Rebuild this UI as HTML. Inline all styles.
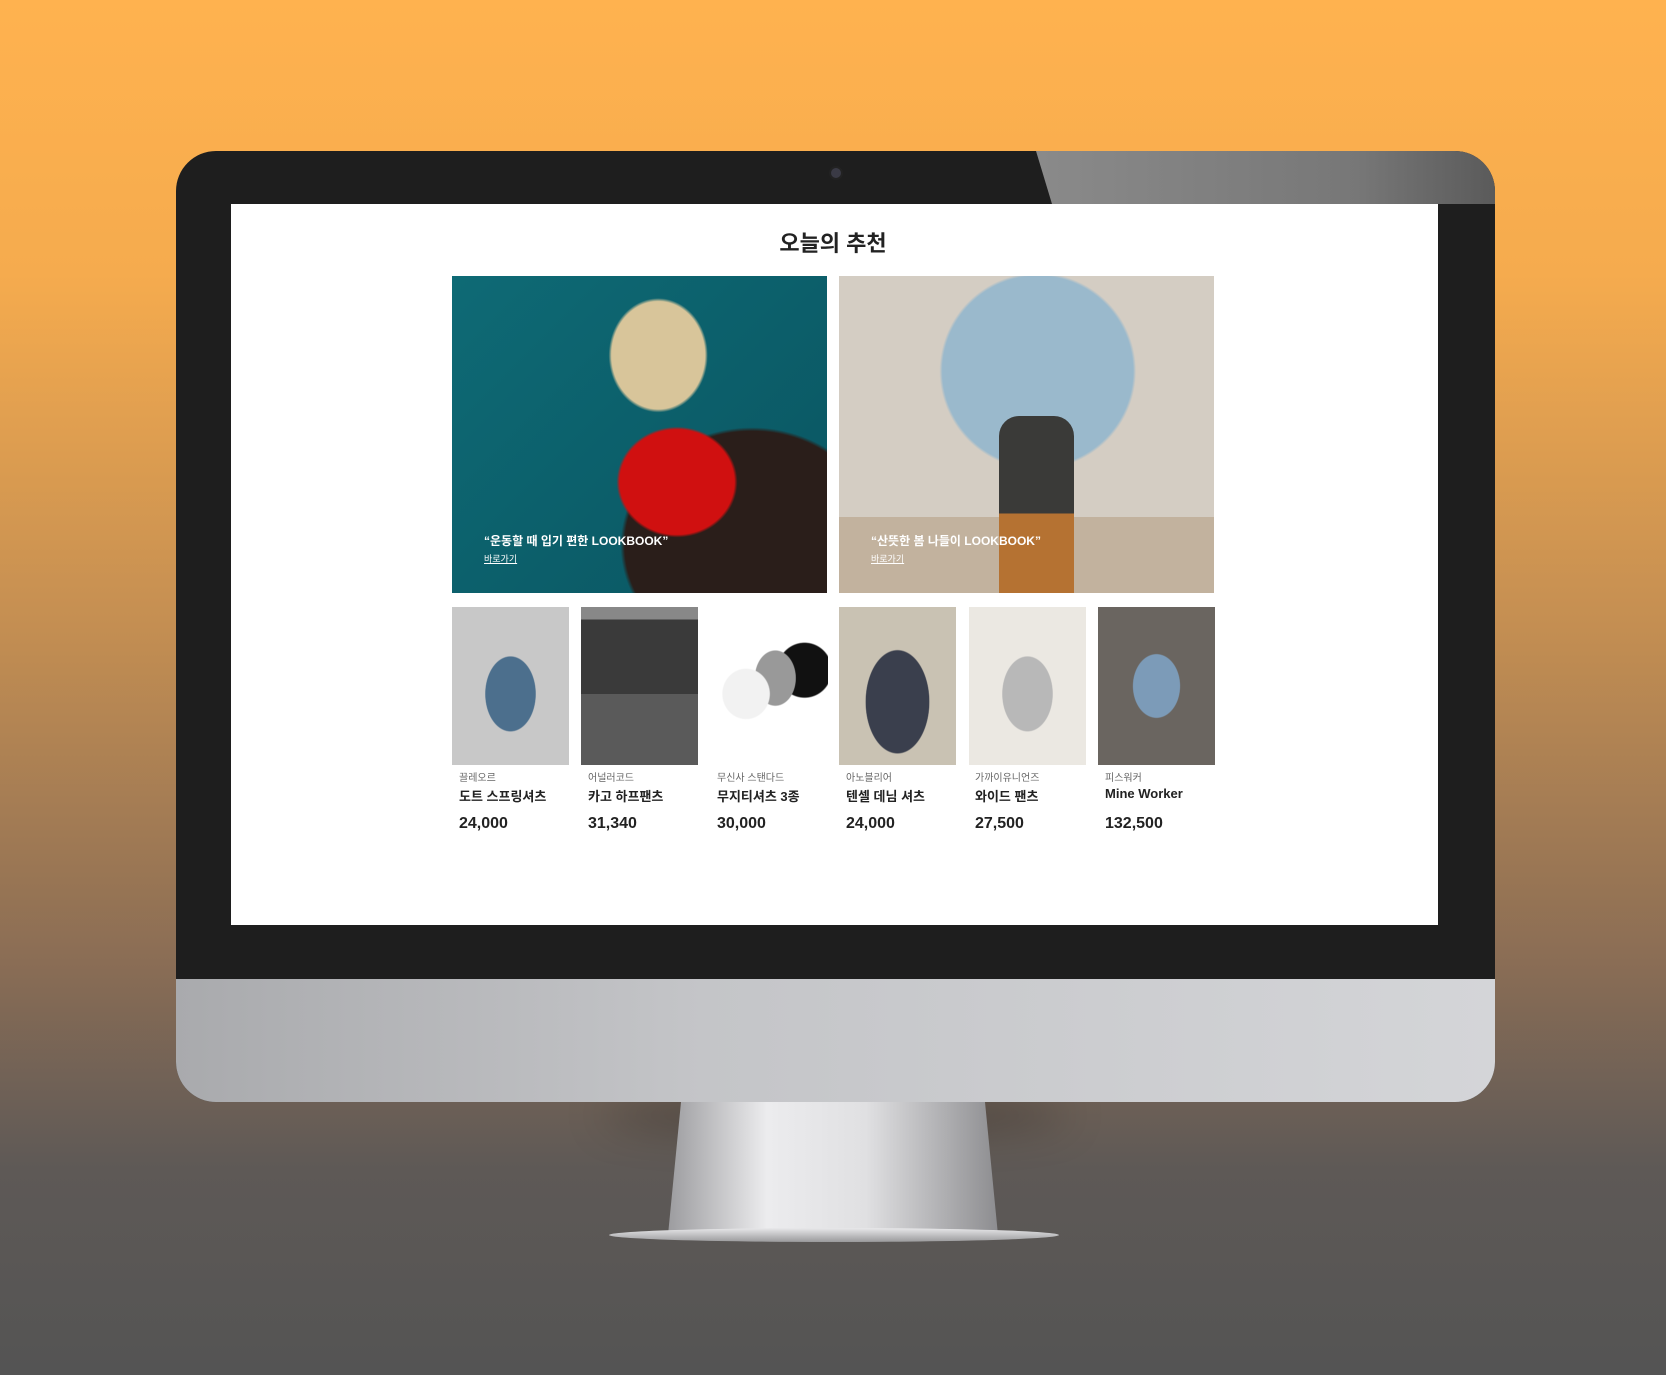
<!DOCTYPE html>
<html><head><meta charset="utf-8"><style>
*{margin:0;padding:0;box-sizing:border-box}
body{width:1666px;height:1375px;overflow:hidden;position:relative;font-family:"Liberation Sans","Noto Sans CJK KR",sans-serif;
background:linear-gradient(180deg,#ffb24f 0%,#f5ab4e 20%,#c58f52 45%,#8a6d55 70%,#5e5956 85%,#545454 100%)}
.abs{position:absolute}
.mon{left:176px;top:151px;width:1319px;height:951px;border-radius:40px;overflow:hidden;background:#1e1e1e}
.chin{left:0;top:828px;width:1319px;height:123px;background:linear-gradient(90deg,#a9aaad,#c4c5c8 40%,#d4d5d8 100%)}
.glare{left:860px;top:0;width:460px;height:53px;background:linear-gradient(90deg,#8a8a8a,#777 70%,#5a5a5a);clip-path:polygon(0 0,100% 0,100% 100%,16px 100%)}
.screen{left:231px;top:204px;width:1207px;height:721px;background:#fff}
.title{left:0;width:1666px;top:226px;text-align:center;font-size:22px;font-weight:bold;color:#222}
.big{top:276px;width:375px;height:317px;overflow:hidden}
.cap{left:32px;top:256px;color:#fff;font-size:12px;font-weight:bold}
.cap2{left:32px;top:276px;color:#fff;font-size:9px;text-decoration:underline}
.p{top:607px;width:117px;height:158px}
.br{top:769px;font-size:10px;color:#666}
.nm{top:786px;font-size:13px;font-weight:bold;color:#222}
.pr{top:815px;font-size:16px;font-weight:bold;color:#222}
</style></head><body>
<div class="abs" style="left:600px;top:1095px;width:470px;height:40px;background:rgba(0,0,0,.25);filter:blur(20px);border-radius:50%"></div>
<div class="abs" style="left:668px;top:1100px;width:330px;height:135px;background:linear-gradient(90deg,#9c9c9f,#ececee 30%,#e0e0e2 60%,#8d8d90);clip-path:polygon(4% 0,96% 0,100% 100%,0 100%)"></div>
<div class="abs" style="left:609px;top:1228px;width:450px;height:14px;border-radius:50%;background:linear-gradient(180deg,#e8e8ea,#9a9a9c)"></div>
<div class="abs mon">
<div class="abs glare"></div>
<div class="abs" style="left:653px;top:15px;width:14px;height:14px;border-radius:50%;background:#3a3a45;border:2px solid #222"></div>
<div class="abs chin"></div>
</div>
<div class="abs screen"></div>
<div class="abs title">오늘의 추천</div>
<div class="abs big" style="left:452px;background:radial-gradient(ellipse at 60% 65%,#d01010 0 18%,transparent 19%),radial-gradient(ellipse at 80% 85%,#2a1e1a 0 30%,transparent 31%),radial-gradient(ellipse at 55% 25%,#d8c59a 0 16%,transparent 17%),linear-gradient(135deg,#0e6a75,#0a5561)">
<div class="abs cap">“운동할 때 입기 편한 LOOKBOOK”</div><div class="abs cap2">바로가기</div></div>
<div class="abs big" style="left:839px;background:radial-gradient(circle at 53% 30%,#9ab9cc 0 32%,transparent 33%),linear-gradient(180deg,#d4cdc3 0 76%,#c2b29e 76%)">
<div class="abs" style="left:160px;top:140px;width:75px;height:177px;background:linear-gradient(180deg,#3a3a38 0 55%,#b57232 55%);border-radius:20px 20px 0 0"></div>
<div class="abs cap">“산뜻한 봄 나들이 LOOKBOOK”</div><div class="abs cap2">바로가기</div></div>
<div class="abs p" style="left:452px;background:radial-gradient(ellipse at 50% 55%,#4c6f8d 0 30%,#c8c8c8 31%)"></div>
<div class="abs p" style="left:581px;background:linear-gradient(180deg,#888 0 8%,#3a3a3a 8% 55%,#5a5a5a 55%)"></div>
<div class="abs p" style="left:711px;background:radial-gradient(ellipse at 30% 55%,#f2f2f2 0 20%,transparent 21%),radial-gradient(ellipse at 55% 45%,#999 0 22%,transparent 23%),radial-gradient(ellipse at 80% 40%,#111 0 20%,#fff 21%)"></div>
<div class="abs p" style="left:839px;background:radial-gradient(ellipse at 50% 60%,#3a3f4d 0 38%,#c9c2b3 39%)"></div>
<div class="abs p" style="left:969px;background:radial-gradient(ellipse at 50% 55%,#b8b8b8 0 30%,#ebe8e2 31%)"></div>
<div class="abs p" style="left:1098px;background:radial-gradient(ellipse at 50% 50%,#7c9bb8 0 28%,#6a6560 29%)"></div>
<div class="abs br" style="left:459px">끌레오르</div><div class="abs nm" style="left:459px">도트 스프링셔츠</div><div class="abs pr" style="left:459px">24,000</div>
<div class="abs br" style="left:588px">어널러코드</div><div class="abs nm" style="left:588px">카고 하프팬츠</div><div class="abs pr" style="left:588px">31,340</div>
<div class="abs br" style="left:717px">무신사 스탠다드</div><div class="abs nm" style="left:717px">무지티셔츠 3종</div><div class="abs pr" style="left:717px">30,000</div>
<div class="abs br" style="left:846px">아노블리어</div><div class="abs nm" style="left:846px">텐셀 데님 셔츠</div><div class="abs pr" style="left:846px">24,000</div>
<div class="abs br" style="left:975px">가까이유니언즈</div><div class="abs nm" style="left:975px">와이드 팬츠</div><div class="abs pr" style="left:975px">27,500</div>
<div class="abs br" style="left:1105px">피스워커</div><div class="abs nm" style="left:1105px">Mine Worker</div><div class="abs pr" style="left:1105px">132,500</div>
</body></html>
